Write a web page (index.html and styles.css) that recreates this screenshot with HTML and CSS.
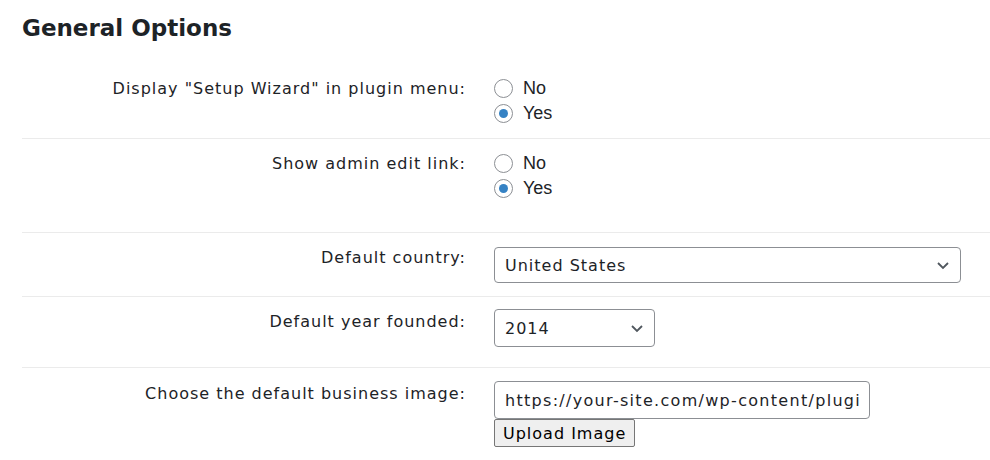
FILE: index.html
```html
<!DOCTYPE html>
<html lang="en">
<head>
<meta charset="UTF-8">
<title>General Options</title>
<link rel="stylesheet" href="styles.css">
</head>
<body>
    <div class="wrap">
        <h2 class="section-title">General Options</h2>

        <div class="form-row first">
            <div class="row-label">Display "Setup Wizard" in plugin menu:</div>
            <div class="row-field">
                <label class="radio"><input type="radio" name="wizard"> No</label>
                <label class="radio"><input type="radio" name="wizard" checked> Yes</label>
            </div>
        </div>

        <div class="form-row tall">
            <div class="row-label">Show admin edit link:</div>
            <div class="row-field">
                <label class="radio"><input type="radio" name="editlink"> No</label>
                <label class="radio"><input type="radio" name="editlink" checked> Yes</label>
            </div>
        </div>

        <div class="form-row country-row">
            <div class="row-label">Default country:</div>
            <div class="row-field">
                <select class="select wide">
                    <option>United States</option>
                    <option>Canada</option>
                    <option>United Kingdom</option>
                </select>
            </div>
        </div>

        <div class="form-row year-row">
            <div class="row-label">Default year founded:</div>
            <div class="row-field">
                <select class="select narrow">
                    <option>2014</option>
                    <option>2015</option>
                    <option>2016</option>
                </select>
            </div>
        </div>

        <div class="form-row image-row">
            <div class="row-label">Choose the default business image:</div>
            <div class="row-field">
                <input type="text" class="text-input" value="https://your-site.com/wp-content/plugins/business/images/default.png">
                <button type="button" class="upload-btn">Upload Image</button>
            </div>
        </div>
    </div>
</body>
</html>
```

FILE: styles.css
```css
/* General options panel */
body {
    margin: 0;
    background-color: #fff;
    color: #1d2327;
    font-family: "DejaVu Sans", Verdana, sans-serif;
}

.wrap {
    padding: 0 0 0 22px;
}

.section-title {
    margin: 0;
    padding-top: 14px;
    font-size: 23px;
    line-height: 28px;
    font-weight: bold;
    color: #1d2327;
}

.form-row {
    display: grid;
    grid-template-columns: 444px 1fr;
    column-gap: 28px;
    padding: 13px 0 12px;
    border-bottom: 1px solid #ebebeb;
}

.form-row.first {
    margin-top: 21px;
}

.form-row.tall {
    padding: 12px 0 31px;
}

.row-label {
    text-align: right;
    font-size: 16px;
    letter-spacing: 1px;
    line-height: 20px;
    padding-top: 3px;
}

.row-field {
    display: flex;
    flex-direction: column;
    align-items: flex-start;
}

.radio {
    display: flex;
    align-items: center;
    gap: 10px;
    height: 25px;
    font-family: "Liberation Sans", Arial, sans-serif;
    font-size: 18px;
}

.radio input {
    appearance: none;
    margin: 0;
    width: 19px;
    height: 19px;
    border: 1px solid #8c8f94;
    border-radius: 50%;
    background: #fff;
    display: grid;
    place-items: center;
}

.radio input:checked::before {
    content: "";
    width: 9px;
    height: 9px;
    border-radius: 50%;
    background: #3582c4;
}

.select {
    appearance: none;
    height: 36px;
    padding: 0 32px 0 10px;
    border: 1px solid #8c8f94;
    border-radius: 4px;
    background: #fff url("data:image/svg+xml,%3Csvg xmlns='http://www.w3.org/2000/svg' width='14' height='14' viewBox='0 0 14 14'%3E%3Cpath d='M2 5l5 5 5-5' fill='none' stroke='%2350575e' stroke-width='1.8'/%3E%3C/svg%3E") no-repeat right 10px center;
    font-family: "DejaVu Sans", Verdana, sans-serif;
    font-size: 16px;
    letter-spacing: 1px;
    color: #1d2327;
}

.country-row {
    padding: 14px 0 13px;
}

.country-row .row-label {
    padding-top: 1px;
}

.select.wide {
    width: 467px;
}

.select.narrow {
    width: 161px;
    height: 38px;
}

.year-row {
    padding: 12px 0 20px;
}

.image-row {
    border-bottom: none;
}

.text-input {
    width: 376px;
    height: 38px;
    box-sizing: border-box;
    padding: 0 10px;
    border: 1px solid #8c8f94;
    border-radius: 4px;
    font-family: "DejaVu Sans", Verdana, sans-serif;
    font-size: 16px;
    letter-spacing: 1.3px;
    color: #1d2327;
}

.upload-btn {
    height: 28px;
    padding: 0 8px;
    border: 1px solid #767676;
    border-radius: 2px;
    background: #efefef;
    font-family: "DejaVu Sans", Verdana, sans-serif;
    font-size: 16px;
    letter-spacing: 1px;
    color: #000;
}
```
